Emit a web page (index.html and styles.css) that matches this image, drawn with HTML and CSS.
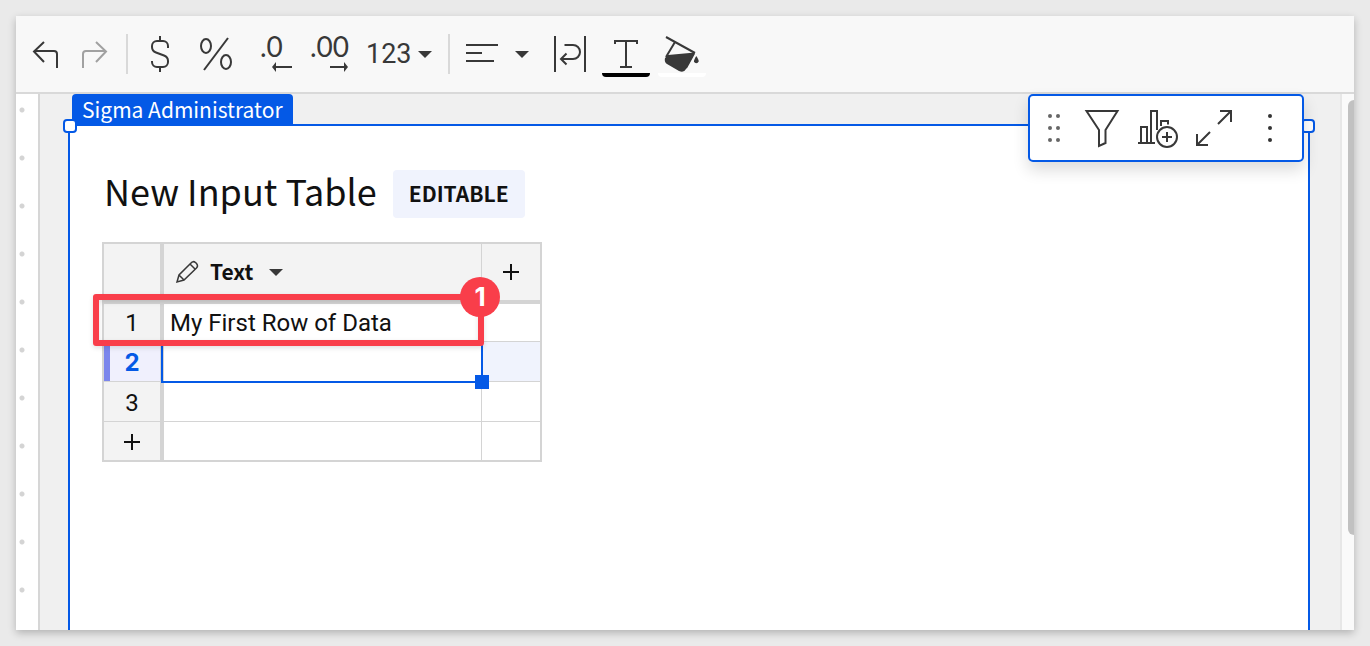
FILE: index.html
```html
<!DOCTYPE html>
<html lang="en">
<head>
<meta charset="utf-8">
<title>New Input Table</title>
<link rel="stylesheet" href="styles.css">
</head>
<body>
<main class="panel">
  <header class="toolbar">
    <div class="group tight">
      <button class="tool" aria-label="Undo"><svg viewBox="0 0 48 48"><path d="M22 12 12 21.500 22 32M12 21H32Q35 21 35 24V38"/></svg></button>
      <button class="tool faded" aria-label="Redo"><svg viewBox="0 0 48 48"><path d="M26 12 36 21.500 26 32M36 21H16Q13 21 13 24V38"/></svg></button>
    </div>
    <span class="divider"></span>
    <div class="group">
      <button class="tool" aria-label="Currency"><svg viewBox="0 0 48 48"><path d="M32 18V16A5 5 0 0 0 27 11H21A5 5 0 0 0 16 16V17Q16 21 20 22.500L28 25.500Q32 27 32 31V32A5 5 0 0 1 27 37H21A5 5 0 0 1 16 32V31M24 6V11M24 37V42"/></svg></button>
      <button class="tool" aria-label="Percent"><svg viewBox="0 0 48 48"><ellipse cx="14" cy="16" rx="5" ry="7"/><ellipse cx="34" cy="32" rx="5" ry="7"/><path d="M36 8 12 40"/></svg></button>
      <button class="tool decimal" aria-label="Fewer decimals"><span>.0</span><svg class="arrow less" viewBox="0 0 20 10"><path d="M3 5H20"/><path class="solid" d="M0 5 4 0V10Z"/></svg></button>
    </div>
    <button class="tool decimal more" aria-label="More decimals"><span>.00</span><svg class="arrow" viewBox="0 0 20 10"><path d="M0 5H17"/><path class="solid" d="M18 5 14 0V10Z"/></svg></button>
    <button class="format">123<svg class="caret" viewBox="0 0 14 8"><path d="M0 1H14L7 8Z"/></svg></button>
    <span class="divider"></span>
    <div class="group tight align">
      <button class="tool" aria-label="Align left"><svg viewBox="0 0 48 48"><path d="M8 15H40M8 23H24M8 31H36"/></svg></button>
      <button class="drop" aria-label="Alignment options"><svg class="caret" viewBox="0 0 14 8"><path d="M0 1H14L7 8Z"/></svg></button>
    </div>
    <div class="group">
      <button class="tool" aria-label="Wrap text"><svg viewBox="0 0 48 48"><path d="M9 6V42M39 6V42M18.500 15H27A7 7 0 0 1 27 29H15M20.500 23.500 15 29 20.500 34.500"/></svg></button>
      <button class="tool" aria-label="Text color"><svg viewBox="0 0 48 48"><path d="M13 14V11H35V14M24 11V37M18 37H30"/><path class="ink" d="M0 43H48Q48 47 44 47H4Q0 47 0 43Z"/></svg></button>
      <button class="tool" aria-label="Fill color"><svg viewBox="0 0 48 48"><path d="M8 7 37 23M17 12 8 27"/><path class="solid" d="M10 25 37 22.500 28 39Q26 43 21 41L9 34Q6 32 7 28Z"/><path d="M36 23.500 28 38"/><path class="solid" d="M38.300 26Q41 30 40.600 31.500A2.400 2.400 0 0 1 36 31.500Q35.800 30 38.300 26Z"/><path class="paper" d="M0 43H48Q48 47 44 47H4Q0 47 0 43Z"/></svg></button>
    </div>
  </header>
  <div class="workspace">
    <div class="ruler"></div>
    <div class="canvas">
      <section class="element">
        <span class="owner">Sigma Administrator</span>
        <span class="grip left"></span>
        <span class="grip right"></span>
        <div class="actions">
          <button class="drag" aria-label="Move"><svg class="gray" viewBox="0 0 48 48"><circle cx="20" cy="12" r="2"/><circle cx="28" cy="12" r="2"/><circle cx="20" cy="24" r="2"/><circle cx="28" cy="24" r="2"/><circle cx="20" cy="36" r="2"/><circle cx="28" cy="36" r="2"/></svg></button>
          <button class="tool" aria-label="Filter"><svg viewBox="0 0 48 48"><path d="M8.500 7H39.500L27.500 26V39L21 42V26Z"/></svg></button>
          <button class="tool" aria-label="Add chart"><svg viewBox="0 0 48 48"><path d="M4 39H21M7 39V23H13V39M17 39V7H23V26M27 22V17H34V20.500"/><circle cx="33" cy="33" r="10"/><path d="M28 33H38M33 28V38"/></svg></button>
          <button class="tool" aria-label="Expand"><svg viewBox="0 0 48 48"><path d="M30 7H41V18M28 20 41 7M7 30V41H18M7 41 20 28"/></svg></button>
          <button class="tool" aria-label="More"><svg class="dots" viewBox="0 0 48 48"><circle cx="24" cy="12" r="2"/><circle cx="24" cy="24" r="2"/><circle cx="24" cy="36" r="2"/></svg></button>
        </div>
        <div class="heading"><h1>New Input Table</h1><span class="tag">EDITABLE</span></div>
        <div class="sheet">
          <table class="grid">
            <colgroup><col class="numbers"><col class="texts"><col class="extra"></colgroup>
            <thead>
              <tr>
                <th></th>
                <th><div class="column"><svg class="pencil" viewBox="0 0 24 24"><path d="M2 22 4 15 16 3Q18 0.500 20.500 2.500L21.500 3.500Q23.500 6 21.500 8L9 20ZM4 15 9 20M15 4 20 9"/></svg><span>Text</span><svg class="caret" viewBox="0 0 14 8"><path d="M0 1H14L7 8Z"/></svg></div></th>
                <th><button class="add" aria-label="Add column"><svg viewBox="0 0 16 16"><path d="M0 8H16M8 0V16"/></svg></button></th>
              </tr>
            </thead>
            <tbody>
              <tr class="short"><th>1</th><td>My First Row of Data</td><td></td></tr>
              <tr class="active"><th>2</th><td><span class="selection"></span></td><td></td></tr>
              <tr><th>3</th><td></td><td></td></tr>
              <tr class="short last"><th><button class="add" aria-label="Add row"><svg viewBox="0 0 16 16"><path d="M0 8H16M8 0V16"/></svg></button></th><td></td><td></td></tr>
            </tbody>
          </table>
          <div class="callout"><span class="step">1</span></div>
        </div>
      </section>
    </div>
    <div class="scroll"><span class="thumb"></span></div>
  </div>
</main>
</body>
</html>
```
FILE: styles.css
```css
* { box-sizing: border-box; }
body {
  margin: 0;
  padding: 16px;
  min-height: 100vh;
  display: flex;
  background: #eaeaea;
  color: #111;
  font-family: Roboto, sans-serif;
}
button { border: 0; padding: 0; background: none; color: inherit; font: inherit; display: block; }
svg { display: block; fill: none; stroke: #383838; stroke-width: 2; }
.panel {
  flex: 1;
  min-width: 0;
  display: flex;
  flex-direction: column;
  background: #fff;
  box-shadow: 0 3px 8px rgba(0, 0, 0, .24);
}
.toolbar {
  height: 78px;
  padding-left: 6px;
  display: flex;
  align-items: center;
  background: #f8f8f8;
  border-bottom: 2px solid #d9d9d9;
  color: #383838;
}
.group { display: flex; gap: 8px; }
.tight { gap: 0; }
.tool { width: 48px; height: 48px; }
.tool svg { width: 48px; height: 48px; }
.faded { opacity: .45; }
.divider { width: 2px; height: 40px; margin: 0 8px; background: #d9d9d9; }
.solid { fill: #383838; stroke: none; }
.ink { fill: #000; stroke: none; }
.paper { fill: #fff; stroke: none; }
.decimal {
  width: 56px;
  padding: 0 12px 4px;
  font: 400 28px/28px Lato, sans-serif;
  text-align: left;
}
.decimal span { display: block; height: 30px; }
.more { padding: 0 6px 4px; }
.decimal .arrow { width: 20px; height: 10px; margin-left: 12px; }
.more .arrow { margin-left: 20px; }
.format { display: flex; align-items: center; gap: 6px; padding: 0 8px 0 6px; font-size: 27px; }
.caret { width: 14px; height: 8px; fill: #383838; stroke: none; }
.align { margin-right: 8px; }
.drop { width: 32px; display: flex; align-items: center; justify-content: center; }
.workspace { flex: 1; display: flex; }
.ruler {
  width: 24px;
  border-right: 2px solid #d6d6d6;
  background: radial-gradient(circle at 6px 16px, #d4d4d4 2px, transparent 3px) 0 0 / 22px 48px;
}
.canvas { flex: 1; display: flex; padding: 30px 30px 0 28px; background: #f0f0f0; }
.element {
  position: relative;
  flex: 1;
  padding: 44px 32px 0;
  background: #fff;
  border: 2px solid #0459e6;
  border-bottom: 0;
}
.owner {
  position: absolute;
  left: 2px;
  bottom: 100%;
  height: 32px;
  padding: 0 10px;
  border-radius: 4px 4px 0 0;
  background: #0459e6;
  color: #fff;
  font: 21px/31px "Noto Sans CJK SC", sans-serif;
  white-space: nowrap;
}
.grip {
  position: absolute;
  top: -7px;
  width: 14px;
  height: 14px;
  background: #fff;
  border: 2px solid #0459e6;
  border-radius: 4px;
}
.grip.left { left: -7px; }
.grip.right { right: -7px; }
.actions {
  position: absolute;
  top: -32px;
  right: 4px;
  height: 68px;
  padding-right: 8px;
  display: flex;
  align-items: center;
  gap: 8px;
  background: #fff;
  border: 2px solid #0459e6;
  border-radius: 5px;
  box-shadow: 0 8px 16px rgba(0, 0, 0, .14);
}
.drag { width: 40px; }
.drag svg { width: 48px; height: 48px; }
.gray { fill: #666; stroke: none; }
.dots { fill: #333; stroke: none; }
.heading { display: flex; align-items: flex-start; gap: 16px; padding-left: 2px; }
h1 { margin: 0; font: 36px/40px "Noto Sans CJK SC", sans-serif; }
.tag {
  height: 48px;
  padding: 0 16px;
  border-radius: 4px;
  background: #f0f3fd;
  font: 700 21px/46px "Noto Sans CJK SC", sans-serif;
}
.sheet { position: relative; width: 440px; margin-top: 24px; }
.grid {
  width: 100%;
  table-layout: fixed;
  border-collapse: separate;
  border-spacing: 0;
  border: 2px solid #d4d4d4;
  font-size: 24px;
  line-height: 28px;
}
.numbers { width: 60px; }
.texts { width: 318px; }
.extra { width: 58px; }
.grid th, .grid td { height: 40px; padding: 0; border: 0 solid #d4d4d4; border-bottom-width: 1px; }
.grid th { background: #f3f3f3; font-weight: 400; }
.grid tbody th { padding-top: 2px; }
.grid thead th { height: 60px; border-bottom-width: 4px; }
.grid th:first-child { border-right-width: 4px; }
.grid th:nth-child(2), .grid td:nth-child(2) { border-right-width: 1px; }
.grid td:nth-child(2) { position: relative; padding-left: 6px; }
.grid .short th, .grid .short td { height: 38px; }
.grid .short:first-child th { padding-top: 0; }
.grid .last th, .grid .last td { border-bottom-width: 0; }
.grid .active th {
  background: linear-gradient(90deg, #7b86ec 6px, #f0f0fd 6px);
  color: #0459e6;
  font: 700 24px/28px Inter, sans-serif;
}
.grid .active td:last-child { background: #f0f3fd; }
.column { display: flex; align-items: center; padding-left: 11px; font: 700 21px/32px "Noto Sans CJK SC", sans-serif; }
.column span { margin: 0 16px 2px 11px; }
.pencil { width: 24px; height: 24px; }
.pencil { stroke-width: 1.500; }
.add { width: 100%; display: flex; justify-content: center; }
.add svg { width: 16px; height: 16px; stroke: #111; }
.selection { position: absolute; z-index: 1; inset: -1px -2px -2px -3px; border: 2px solid #0459e6; }
.selection::after {
  content: "";
  position: absolute;
  right: -8px;
  bottom: -8px;
  width: 14px;
  height: 14px;
  background: #0459e6;
}
.callout {
  position: absolute;
  z-index: 2;
  top: 52px;
  left: -9px;
  width: 391px;
  height: 52px;
  border: 6px solid #f93e4a;
  border-radius: 3px;
  box-shadow: 0 2px 5px rgba(0, 0, 0, .12), inset 0 2px 5px rgba(0, 0, 0, .12);
}
.step {
  position: absolute;
  top: -23px;
  right: -22px;
  width: 40px;
  height: 40px;
  border-radius: 50%;
  background: #f93e4a;
  color: #fff;
  font: 700 26px/40px Inter, sans-serif;
  text-align: center;
}
.scroll { width: 14px; display: flex; justify-content: flex-end; padding-top: 6px; background: #fafafa; border-left: 2px solid #e7e7e7; }
.thumb { width: 6px; height: 82%; background: #c1c1c1; border-radius: 6px 0 0 6px; }
```
